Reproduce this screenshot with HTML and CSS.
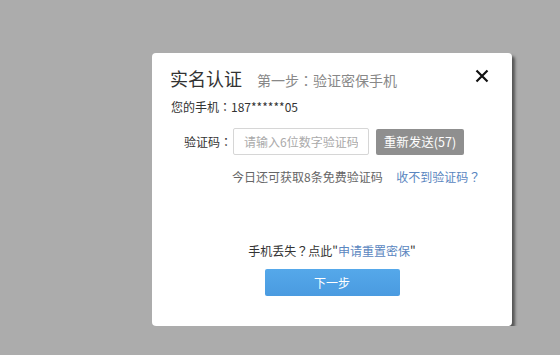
FILE: index.html
```html
<!DOCTYPE html>
<html lang="zh-CN">
<head>
  <meta charset="UTF-8">
  <title>实名认证</title>
  <link rel="stylesheet" href="styles.css">
</head>
<body>
  <div class="dialog">
    <div class="dialog-head">
      <span class="title">实名认证</span>
      <span class="step">第一步<span class="punc" lang="zh-TW">：</span>验证密保手机</span>
      <span class="close">
        <svg width="14" height="14" viewBox="0 0 14 14"><path d="M1.5 1.5 L12.5 12.5 M12.5 1.5 L1.5 12.5" stroke="#111" stroke-width="2.2" fill="none"/></svg>
      </span>
    </div>
    <p class="phone">您的手机<span class="punc" lang="zh-TW">：</span>187******05</p>

    <div class="code-row">
      <span class="label">验证码<span class="punc" lang="zh-TW">：</span></span>
      <input class="code-input" type="text" placeholder="请输入6位数字验证码">
      <span class="resend">重新发送(57)</span>
    </div>
    <div class="tip">
      今日还可获取8条免费验证码
      <a href="#" class="link help">收不到验证码<span class="punc" lang="zh-TW">？</span></a>
    </div>

    <div class="lost">手机丢失<span class="punc" lang="zh-TW">？</span>点此"<a href="#" class="link">申请重置密保</a>"</div>
    <div class="actions">
      <a href="#" class="next">下一步</a>
    </div>
  </div>
</body>
</html>
```

FILE: styles.css
```css
body {
  margin: 0;
  background-color: #acacac;
  font-family: "Microsoft YaHei", "Noto Sans CJK SC", sans-serif;
  font-size: 12px;
  color: #333;
}
.punc {
  font-family: "Noto Sans CJK TC", sans-serif;
}
.dialog {
  margin: 53px 0 0 152px;
  width: 360px;
  height: 273px;
  background-color: #fff;
  border-radius: 4px;
  box-shadow: 3px 3px 3px rgba(0, 0, 0, 0.5);
  padding: 0 18px;
  box-sizing: border-box;
  position: relative;
}
.dialog-head {
  display: flex;
  align-items: baseline;
  padding-top: 12px;
  height: 30px;
}
.title {
  font-size: 18px;
  color: #333;
}
.step {
  font-size: 14px;
  color: #888;
  margin-left: 15px;
}
.close {
  position: absolute;
  top: 16px;
  right: 23px;
  cursor: pointer;
}
.phone {
  margin: 3px 0 0 1px;
  line-height: 18px;
  color: #333;
}
.code-row {
  display: flex;
  align-items: center;
  margin-top: 12px;
}
.label {
  width: 62px;
  text-align: right;
  color: #333;
}
.code-input {
  width: 136px;
  height: 27px;
  box-sizing: border-box;
  border: 1px solid #d6d6d6;
  border-radius: 2px;
  padding: 0 10px;
  font-family: inherit;
  font-size: 12px;
  margin-left: 1px;
}
.code-input::placeholder {
  color: #aaa;
}
.resend {
  margin-left: 7px;
  width: 88px;
  height: 26px;
  line-height: 26px;
  text-align: center;
  color: #fff;
  background-color: #8f8f8f;
  border-radius: 2px;
  font-size: 12.5px;
}
.tip {
  margin: 13px 0 0 62px;
  color: #666;
  line-height: 18px;
}
.link {
  color: #5a86c0;
  text-decoration: none;
}
.help {
  margin-left: 11px;
}
.lost {
  text-align: center;
  margin-top: 56px;
  line-height: 18px;
  color: #333;
}
.actions {
  text-align: center;
  margin-top: 9px;
}
.next {
  display: inline-block;
  width: 135px;
  height: 27px;
  line-height: 27px;
  background: linear-gradient(#55a8ea, #4a9be0);
  color: #fff;
  text-decoration: none;
  border-radius: 2px;
  font-size: 12px;
}
```
